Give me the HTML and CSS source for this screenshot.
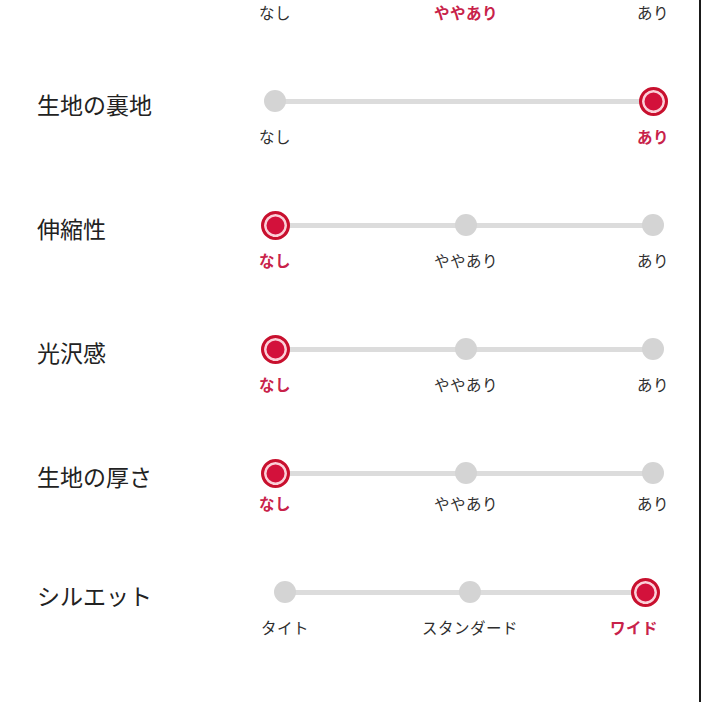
FILE: index.html
```html
<!DOCTYPE html>
<html lang="ja">

<head>
    <meta charset="UTF-8">
    <meta name="viewport" content="width=device-width, initial-scale=1.0">
    <title>素材感</title>
    <link rel="stylesheet" href="styles.css">
</head>

<body>
    <div class="page">
        <div class="spec-list">
            <div class="spec-row">
                <div class="spec-name"></div>
                <div class="scale">
                    <div class="opt"><span class="dot"></span><span class="opt-label">なし</span></div>
                    <div class="seg first"></div>
                    <div class="opt on"><span class="dot"></span><span class="opt-label">ややあり</span></div>
                    <div class="seg second"></div>
                    <div class="opt"><span class="dot"></span><span class="opt-label">あり</span></div>
                </div>
            </div>

            <div class="spec-row">
                <div class="spec-name">生地の裏地</div>
                <div class="scale">
                    <div class="opt"><span class="dot"></span><span class="opt-label">なし</span></div>
                    <div class="seg"></div>
                    <div class="opt on"><span class="dot"></span><span class="opt-label">あり</span></div>
                </div>
            </div>

            <div class="spec-row">
                <div class="spec-name">伸縮性</div>
                <div class="scale">
                    <div class="opt on"><span class="dot"></span><span class="opt-label">なし</span></div>
                    <div class="seg first"></div>
                    <div class="opt"><span class="dot"></span><span class="opt-label">ややあり</span></div>
                    <div class="seg second"></div>
                    <div class="opt"><span class="dot"></span><span class="opt-label">あり</span></div>
                </div>
            </div>

            <div class="spec-row">
                <div class="spec-name">光沢感</div>
                <div class="scale">
                    <div class="opt on"><span class="dot"></span><span class="opt-label">なし</span></div>
                    <div class="seg first"></div>
                    <div class="opt"><span class="dot"></span><span class="opt-label">ややあり</span></div>
                    <div class="seg second"></div>
                    <div class="opt"><span class="dot"></span><span class="opt-label">あり</span></div>
                </div>
            </div>

            <div class="spec-row tight">
                <div class="spec-name">生地の厚さ</div>
                <div class="scale">
                    <div class="opt on"><span class="dot"></span><span class="opt-label">なし</span></div>
                    <div class="seg first"></div>
                    <div class="opt"><span class="dot"></span><span class="opt-label">ややあり</span></div>
                    <div class="seg second"></div>
                    <div class="opt"><span class="dot"></span><span class="opt-label">あり</span></div>
                </div>
            </div>

            <div class="spec-row">
                <div class="spec-name">シルエット</div>
                <div class="scale narrow">
                    <div class="opt"><span class="dot"></span><span class="opt-label">タイト</span></div>
                    <div class="seg first"></div>
                    <div class="opt"><span class="dot"></span><span class="opt-label">スタンダード</span></div>
                    <div class="seg second"></div>
                    <div class="opt on"><span class="dot"></span><span class="opt-label end">ワイド</span></div>
                </div>
            </div>
        </div>
    </div>
</body>

</html>
```

FILE: styles.css
```css
*,
*::before,
*::after {
    box-sizing: border-box;
}

html,
body {
    margin: 0;
    padding: 0;
    height: 100%;
    overflow: hidden;
    background: #fff;
    font-family: "Noto Sans CJK JP", "Noto Sans", sans-serif;
}

.page {
    display: flow-root;
    width: 701px;
    height: 100%;
    border-right: 2px solid #1a1a1a;
}

.spec-list {
    margin-top: -38px;
}

.spec-row {
    display: flex;
    align-items: flex-start;
    padding-left: 37px;
    margin-bottom: 64px;
}

.spec-name {
    width: 223px;
    flex-shrink: 0;
    padding-top: 3px;
    font-size: 23px;
    line-height: 30px;
    color: #222;
}

.scale {
    display: flex;
    align-items: flex-start;
    width: 408px;
}

.scale.narrow {
    margin-left: 10px;
    width: 390px;
}

.opt {
    position: relative;
    z-index: 1;
    width: 30px;
    flex-shrink: 0;
    display: flex;
    flex-direction: column;
    align-items: center;
}

.dot {
    display: flex;
    width: 22px;
    height: 22px;
    margin: 4px 0;
    border-radius: 50%;
    background: #d4d4d4;
}

.opt.on .dot {
    width: 29px;
    height: 29px;
    margin: 0.5px 0;
    background: #d3113b;
    border: 3.5px solid #c8102e;
    box-shadow: inset 0 0 0 2.5px #fbd0d8;
}

.opt-label {
    display: flex;
    justify-content: center;
    width: 30px;
    margin-top: 10px;
    font-size: 15.5px;
    line-height: 20px;
    letter-spacing: 0.5px;
    white-space: nowrap;
    color: #2e2e2e;
}

.opt.on .opt-label {
    color: #c8224a;
    font-weight: bold;
}

.opt-label.end {
    margin-left: -22px;
}

.tight .opt-label {
    margin-top: 5px;
}

.seg {
    flex: 1;
    height: 5px;
    margin: 12.5px -15px 0;
    background: #dcdcdc;
}

.seg.first {
    flex-grow: 191;
}

.seg.second {
    flex-grow: 187;
}

.narrow .seg.first {
    flex-grow: 185;
}

.narrow .seg.second {
    flex-grow: 175;
}
```
